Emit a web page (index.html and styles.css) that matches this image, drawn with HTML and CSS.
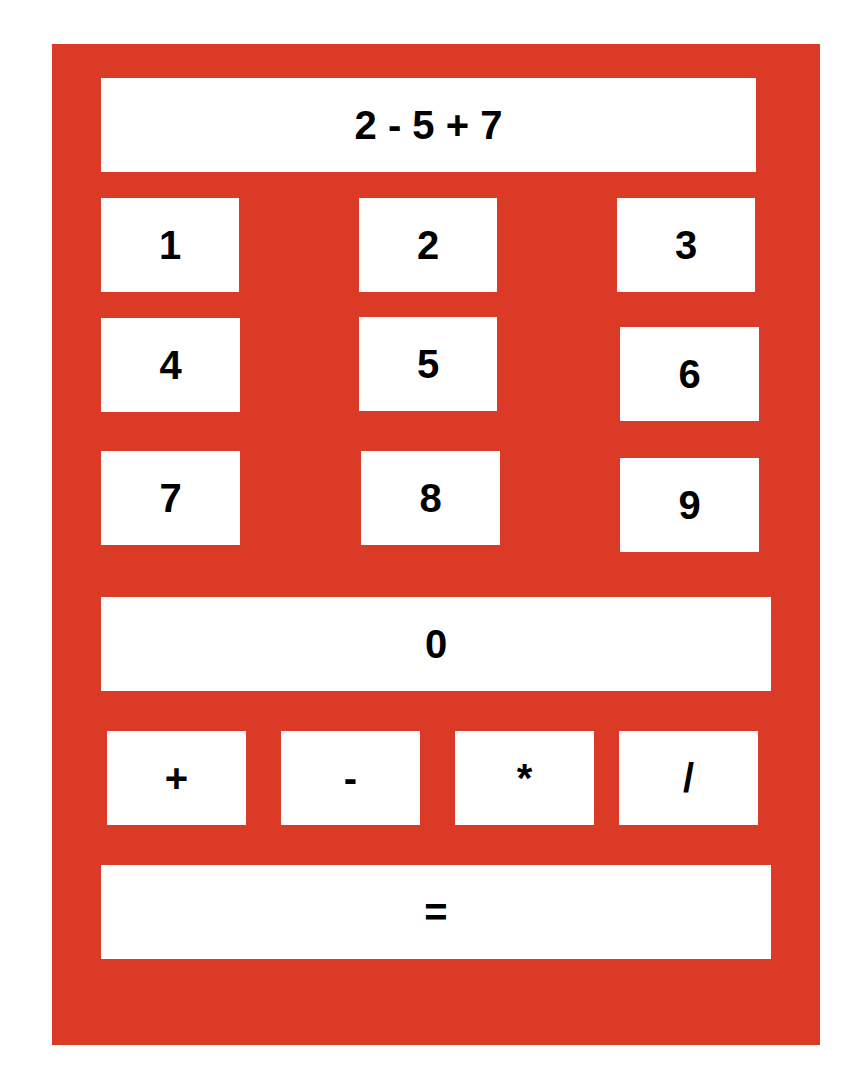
FILE: index.html
```html
<!DOCTYPE html>
<html lang="en">
<head>
<meta charset="utf-8">
<title>Calculator</title>
<link rel="stylesheet" href="styles.css">
</head>
<body>
<div class="calc">
  <div class="display">2 - 5 + 7</div>
  <div class="row row-1">
    <button class="key">1</button>
    <button class="key">2</button>
    <button class="key">3</button>
  </div>
  <div class="row row-2">
    <button class="key key-wide key-4">4</button>
    <button class="key">5</button>
    <button class="key key-wide key-6">6</button>
  </div>
  <div class="row row-3">
    <button class="key key-wide">7</button>
    <button class="key key-wide key-8">8</button>
    <button class="key key-wide key-9">9</button>
  </div>
  <button class="key key-full key-zero">0</button>
  <div class="row ops">
    <button class="key key-wide op-plus">+</button>
    <button class="key key-wide op-minus">-</button>
    <button class="key key-wide op-times">*</button>
    <button class="key key-wide op-div">/</button>
  </div>
  <button class="key key-full key-eq">=</button>
</div>
</body>
</html>
```

FILE: styles.css
```css
html, body {
  margin: 0;
  padding: 0;
  background: #ffffff;
}

body {
  font-family: "Liberation Sans", Arial, Helvetica, sans-serif;
}

.calc {
  box-sizing: border-box;
  width: 768px;
  height: 1001px;
  margin: 44px 0 0 52px;
  padding: 34px 0 0 49px;
  background: #db3b26;
  display: flex;
  flex-direction: column;
  align-items: flex-start;
}

.display {
  width: 655px;
  height: 94px;
  background: #ffffff;
  color: #000000;
  font-size: 40px;
  font-weight: bold;
  display: flex;
  align-items: center;
  justify-content: center;
}

.key {
  box-sizing: border-box;
  width: 138px;
  height: 94px;
  border: 0;
  padding: 0;
  margin: 0;
  background: #ffffff;
  color: #000000;
  font-family: inherit;
  font-size: 40px;
  font-weight: bold;
  display: flex;
  align-items: center;
  justify-content: center;
  flex: none;
}

.key-wide {
  width: 139px;
}

.row {
  display: flex;
  align-items: flex-start;
}

.row-1 {
  width: 654px;
  justify-content: space-between;
  margin-top: 26px;
}

.row-2 {
  margin-top: 25px;
}

.key-4 {
  margin-top: 1px;
  margin-right: 119px;
}

.key-6 {
  margin-top: 10px;
  margin-left: 123px;
}

.row-3 {
  margin-top: 30px;
}

.key-8 {
  margin-left: 121px;
}

.key-9 {
  margin-top: 7px;
  margin-left: 120px;
}

.key-full {
  width: 670px;
}

.key-zero {
  margin-top: 45px;
}

.ops {
  margin-top: 40px;
  padding-left: 6px;
}

.op-minus,
.op-times {
  margin-left: 35px;
}

.op-div {
  margin-left: 25px;
}

.key-eq {
  margin-top: 40px;
}
```
